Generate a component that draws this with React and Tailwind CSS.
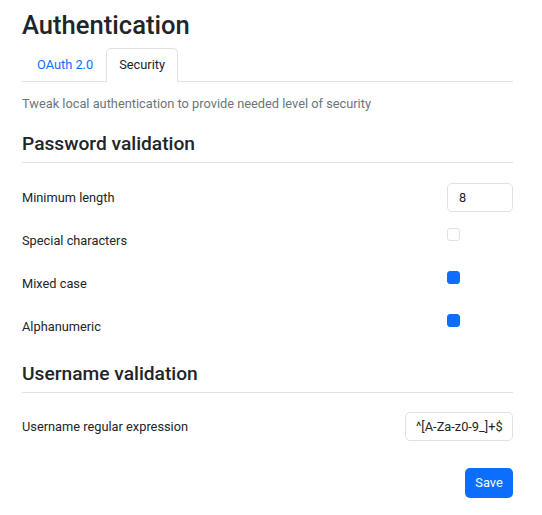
import React, { useState } from 'react';

function CheckRow({ label, checked, onToggle }) {
  return (
    <div className="flex h-[43px] items-center justify-between">
      <span className="text-[12.8px] text-[#212529]">{label}</span>
      <div className="flex w-[66px] justify-start">
        <button
          onClick={onToggle}
          className={`mb-[12px] h-[13px] w-[13px] rounded-[3px] border ${checked ? 'border-[#0d6efd] bg-[#0d6efd]' : 'border-[#dee2e6] bg-white'}`}
        />
      </div>
    </div>
  );
}

export default function App() {
  const [minLength, setMinLength] = useState('8');
  const [special, setSpecial] = useState(false);
  const [mixed, setMixed] = useState(true);
  const [alnum, setAlnum] = useState(true);
  const [regex, setRegex] = useState('^[A-Za-z0-9_]+$');

  return (
    <div className="min-h-screen bg-white pl-[22px] pr-[29px] pt-[10px] font-['Roboto',sans-serif] text-[#212529]">
      <h1 className="text-[25.6px] font-medium leading-[31px]">Authentication</h1>

      <nav className="mt-[7px] flex border-b border-[#dee2e6] text-[12.8px]">
        <button className="-mb-px h-[34px] rounded-t-[5px] border border-transparent pl-[14px] pr-[12px] text-[#0d6efd]">OAuth 2.0</button>
        <button className="-mb-px h-[34px] rounded-t-[5px] border border-[#dee2e6] border-b-white bg-white px-[12px] text-[#212529]">Security</button>
      </nav>

      <p className="mt-[12px] text-[12.8px] leading-[20px] text-[#6c757d]">Tweak local authentication to provide needed level of security</p>

      <h2 className="mt-[19px] border-b border-[#dee2e6] pb-[7px] text-[19.2px] font-medium leading-[22px]">Password validation</h2>

      <div className="mt-[13px]">
        <div className="flex h-[43px] items-center justify-between">
          <span className="text-[12.8px]">Minimum length</span>
          <input
            value={minLength}
            onChange={(e) => setMinLength(e.target.value)}
            className="h-[29px] w-[66px] rounded-[5px] border border-[#dee2e6] pl-[11px] text-[12.8px] text-[#212529] outline-none"
          />
        </div>
        <CheckRow label="Special characters" checked={special} onToggle={() => setSpecial(!special)} />
        <CheckRow label="Mixed case" checked={mixed} onToggle={() => setMixed(!mixed)} />
        <CheckRow label="Alphanumeric" checked={alnum} onToggle={() => setAlnum(!alnum)} />
      </div>

      <h2 className="mt-[15px] border-b border-[#dee2e6] pb-[7px] text-[19.2px] font-medium leading-[22px]">Username validation</h2>

      <div className="mt-[12px] flex h-[43px] items-center justify-between">
        <span className="text-[12.8px]">Username regular expression</span>
        <input
          value={regex}
          onChange={(e) => setRegex(e.target.value)}
          className="h-[29px] w-[108px] rounded-[5px] border border-[#dee2e6] pl-[10px] text-[12.8px] text-[#212529] outline-none"
        />
      </div>

      <div className="mt-[20px] flex justify-end">
        <button className="h-[30px] w-[48px] rounded-[5px] bg-[#0d6efd] text-[12.8px] text-white">Save</button>
      </div>
    </div>
  );
}
